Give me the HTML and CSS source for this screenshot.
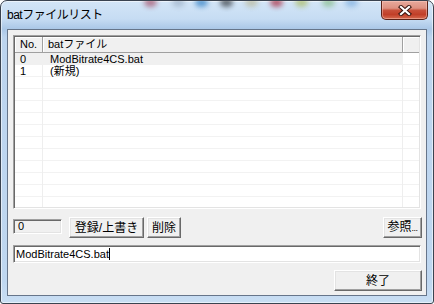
FILE: index.html
```html
<!DOCTYPE html>
<html lang="ja">
<head>
<meta charset="utf-8">
<title>batファイルリスト</title>
<link rel="stylesheet" href="styles.css">
</head>
<body>
<div class="window">
  <div class="titlebar">
    <div class="glass" aria-hidden="true">
      <span class="blob b1"></span><span class="blob b2"></span><span class="blob b3"></span>
      <span class="blob b4"></span><span class="blob b5"></span><span class="blob b6"></span>
      <span class="blob b7"></span><span class="blob b8"></span><span class="blob b9"></span>
    </div>
    <span class="title">batファイルリスト</span>
    <button class="close" aria-label="閉じる">
      <svg width="14" height="11" viewBox="0 0 14 11">
        <path d="M3 2 L11 9 M11 2 L3 9" stroke="#3a1610" stroke-width="4.2" stroke-linecap="square" fill="none"/>
        <path d="M3 2 L11 9 M11 2 L3 9" stroke="#ffffff" stroke-width="2.2" stroke-linecap="square" fill="none"/>
      </svg>
    </button>
  </div>
  <div class="client">
    <div class="listview">
      <div class="lv-header">
        <div class="hcell c1">No.</div>
        <div class="hcell c2">batファイル</div>
        <div class="hcell filler"></div>
      </div>
      <div class="lv-body">
        <div class="row sel"><span class="cell c1">0</span><span class="cell c2">ModBitrate4CS.bat</span></div>
        <div class="row"><span class="cell c1">1</span><span class="cell c2">(新規)</span></div>
      </div>
    </div>
    <div class="toolbar">
      <div class="counter">0</div>
      <button class="btn btn-save">登録/上書き</button>
      <button class="btn btn-del">削除</button>
      <button class="btn btn-browse">参照<span class="dots">...</span></button>
    </div>
    <div class="pathinput">ModBitrate4CS.bat<span class="caret"></span></div>
    <div class="footer">
      <button class="btn btn-close">終了</button>
    </div>
  </div>
</div>
</body>
</html>
```

FILE: styles.css
```css
html, body {
  margin: 0;
  padding: 0;
  background: #ffffff;
}

.window {
  width: 434px;
  height: 304px;
  box-sizing: border-box;
  border: 1px solid #3a4350;
  border-radius: 7px 7px 3px 3px;
  background: linear-gradient(to bottom, #d3e5f7 0, #c6dcf3 18px, #aac7e7 28px, #bcd4ee 36px, #bfd7f0 280px, #c9def3 100%);
  box-shadow: inset 0 0 0 1px rgba(255, 255, 255, 0.55);
  display: flex;
  flex-direction: column;
  position: relative;
  overflow: hidden;
  font-family: "Liberation Sans", "Noto Sans CJK JP", sans-serif;
  color: #000;
}

.titlebar {
  height: 28px;
  display: flex;
  align-items: flex-start;
  position: relative;
  flex: none;
}

.glass {
  position: absolute;
  left: 0;
  top: 0;
  width: 100%;
  height: 12px;
  overflow: hidden;
}

.blob {
  position: absolute;
  top: -3px;
  width: 13px;
  height: 9px;
  border-radius: 50%;
  filter: blur(2.5px);
  opacity: 0.7;
}
.b1 { left: 143px; background: #a4506a; }
.b2 { left: 171px; background: #9fb2c8; }
.b3 { left: 194px; background: #2f7fc4; }
.b4 { left: 219px; background: #353b40; }
.b5 { left: 244px; background: #b9b89a; }
.b6 { left: 269px; background: #a8283e; }
.b7 { left: 294px; background: #a9bb62; }
.b8 { left: 321px; background: #86bc8a; }
.b9 { left: 344px; background: #7eaedf; }

.title {
  position: relative;
  padding: 7px 0 0 6px;
  font-size: 12px;
  line-height: 14px;
  letter-spacing: -0.5px;
  color: #000;
}

.close {
  position: relative;
  margin-left: auto;
  margin-right: 5px;
  width: 47px;
  height: 19px;
  padding: 0;
  box-sizing: border-box;
  border: 1px solid #5a2218;
  border-top: none;
  border-radius: 0 0 5px 5px;
  background: linear-gradient(to bottom, #e7a99c 0, #dd9181 40%, #c8503a 52%, #c13f28 75%, #d66a4f 100%);
  box-shadow: inset 0 0 0 1px rgba(255, 210, 200, 0.45);
  display: flex;
  align-items: center;
  justify-content: center;
}

.close svg {
  display: block;
}

.client {
  width: 420px;
  height: 267px;
  box-sizing: border-box;
  margin: 0 6px;
  border: 1px solid #66758a;
  background: #f0f0f0;
  padding: 5px 5px 4px 5px;
  display: flex;
  flex-direction: column;
  flex: none;
}

/* sunken 3D edge */
.listview,
.counter,
.pathinput {
  box-sizing: border-box;
  border: 1px solid;
  border-color: #a0a0a0 #ffffff #ffffff #a0a0a0;
  box-shadow: inset 1px 1px 0 #696969, inset -1px -1px 0 #e3e3e3;
}

.listview {
  height: 174px;
  background: #ffffff;
  padding: 1px;
  display: flex;
  flex-direction: column;
  flex: none;
}

.lv-header {
  display: flex;
  height: 16px;
  flex: none;
  background: #f0f0f0;
  font-size: 11px;
}

.hcell {
  box-sizing: border-box;
  height: 16px;
  line-height: 15px;
  padding-left: 5px;
  border-right: 1px solid #a0a0a0;
  border-bottom: 1px solid #a0a0a0;
  box-shadow: inset 1px 1px 0 #ffffff;
  white-space: nowrap;
}

.hcell.c1 { width: 28px; }
.hcell.c2 { width: 360px; }
.hcell.filler { flex: 1; border-right: none; }

.lv-body {
  flex: 1;
  font-size: 11px;
  background:
    linear-gradient(to right, transparent 27px, #eeeeee 27px, #eeeeee 28px, transparent 28px),
    linear-gradient(to right, transparent 387px, #eeeeee 387px, #eeeeee 388px, transparent 388px),
    repeating-linear-gradient(to bottom, transparent 0, transparent 11px, #f2f2f2 11px, #f2f2f2 12px);
}

.row {
  display: flex;
  width: 388px;
  height: 12px;
  box-sizing: border-box;
  padding-top: 1px;
  line-height: 11px;
  white-space: nowrap;
}

.row.sel {
  background: #f0f0f0;
}

.cell.c1 { width: 28px; padding-left: 5px; box-sizing: border-box; }
.cell.c2 { padding-left: 7px; }

.toolbar {
  margin-top: 8px;
  height: 21px;
  display: flex;
  align-items: flex-start;
  flex: none;
}

.counter {
  width: 49px;
  height: 15px;
  margin-top: 2px;
  background: #f0f0f0;
  padding-left: 4px;
  font-size: 11px;
  line-height: 13px;
}

.btn {
  box-sizing: border-box;
  height: 21px;
  padding: 0;
  border: 1px solid;
  border-color: #ffffff #696969 #696969 #ffffff;
  box-shadow: inset -1px -1px 0 #a0a0a0, inset 1px 1px 0 #e3e3e3;
  background: #f0f0f0;
  font-family: "Liberation Sans", "Noto Sans CJK JP", sans-serif;
  font-size: 12px;
  line-height: 18px;
  color: #000;
  text-align: center;
  white-space: nowrap;
}

.btn-save { width: 75px; margin-left: 7px; }
.btn-del { width: 34px; margin-left: 3px; }
.btn-browse { width: 39px; margin-left: auto; margin-right: -1px; }
.dots { font-size: 9px; letter-spacing: -0.5px; }

.pathinput {
  margin-top: 7px;
  height: 18px;
  background: #ffffff;
  padding-left: 2px;
  font-size: 11px;
  line-height: 16px;
  white-space: nowrap;
  flex: none;
}

.caret {
  display: inline-block;
  width: 1px;
  height: 12px;
  background: #000;
  vertical-align: -2px;
}

.footer {
  margin-top: 7px;
  display: flex;
  justify-content: flex-end;
  flex: none;
}

.btn-close { width: 88px; margin-right: -1px; }
```
